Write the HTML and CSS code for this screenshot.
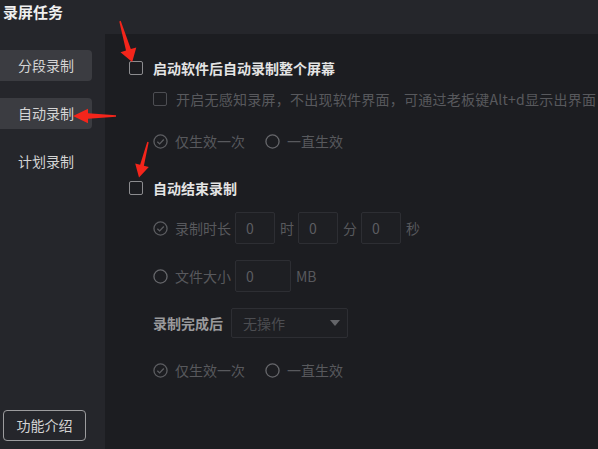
FILE: index.html
```html
<!DOCTYPE html>
<html lang="zh">
<head>
<meta charset="utf-8">
<link rel="stylesheet" href="styles.css">
</head>
<body>
<div class="app">
  <header class="topbar">录屏任务</header>
  <div class="body">
    <aside class="sidebar">
      <div class="nav">
        <div class="nav-item active">分段录制</div>
        <div class="nav-item active">自动录制</div>
        <div class="nav-item">计划录制</div>
      </div>
      <div class="intro">功能介绍</div>
    </aside>
    <main class="main">
      <div class="row r1">
        <span class="cbox"></span>
        <span class="label strong">启动软件后自动录制整个屏幕</span>
      </div>
      <div class="row r2 sub">
        <span class="cbox dim"></span>
        <span class="label dimtext wide-text">开启无感知录屏，不出现软件界面，可通过老板键Alt+d显示出界面</span>
      </div>
      <div class="row r3 sub">
        <svg class="ico" viewBox="0 0 16 16"><circle cx="8" cy="8" r="7" fill="none" stroke="#5c5d61" stroke-width="1.4"/><path d="M4.6 8.2 L7.1 10.6 L11.5 5.9" fill="none" stroke="#5c5d61" stroke-width="1.4"/></svg>
        <span class="label dimtext">仅生效一次</span>
        <svg class="ico gap" viewBox="0 0 16 16"><circle cx="8" cy="8" r="7" fill="none" stroke="#66676b" stroke-width="1.4"/></svg>
        <span class="label dimtext">一直生效</span>
      </div>
      <div class="row r4">
        <span class="cbox"></span>
        <span class="label strong">自动结束录制</span>
      </div>
      <div class="row r5 sub">
        <svg class="ico" viewBox="0 0 16 16"><circle cx="8" cy="8" r="7" fill="none" stroke="#5c5d61" stroke-width="1.4"/><path d="M4.6 8.2 L7.1 10.6 L11.5 5.9" fill="none" stroke="#5c5d61" stroke-width="1.4"/></svg>
        <span class="label dimtext lead">录制时长</span>
        <span class="input">0</span><span class="unit">时</span>
        <span class="input">0</span><span class="unit">分</span>
        <span class="input">0</span><span class="unit">秒</span>
      </div>
      <div class="row r6 sub">
        <svg class="ico" viewBox="0 0 16 16"><circle cx="8" cy="8" r="7" fill="none" stroke="#66676b" stroke-width="1.4"/></svg>
        <span class="label dimtext lead">文件大小</span>
        <span class="input wide">0</span><span class="unit">MB</span>
      </div>
      <div class="row r7 sub">
        <span class="label mid">录制完成后</span>
        <span class="select"><span>无操作</span><svg class="caret" viewBox="0 0 10 6"><path d="M0 0 H10 L5 6 Z" fill="#646569"/></svg></span>
      </div>
      <div class="row r8 sub">
        <svg class="ico" viewBox="0 0 16 16"><circle cx="8" cy="8" r="7" fill="none" stroke="#5c5d61" stroke-width="1.4"/><path d="M4.6 8.2 L7.1 10.6 L11.5 5.9" fill="none" stroke="#5c5d61" stroke-width="1.4"/></svg>
        <span class="label dimtext">仅生效一次</span>
        <svg class="ico gap" viewBox="0 0 16 16"><circle cx="8" cy="8" r="7" fill="none" stroke="#66676b" stroke-width="1.4"/></svg>
        <span class="label dimtext">一直生效</span>
      </div>
    </main>
  </div>
  <svg class="arrows" viewBox="0 0 598 449" width="598" height="449">
    <polygon fill="#f4251b" points="119.3,21.4 120.7,20.8 130.8,49.1 136.3,47.4 132.2,62 120.5,52.2 126,50.5"/>
    <polygon fill="#f4251b" points="116,115.3 88,113.3 88,108.8 73,116 88,123.2 88,118.7 116,116.7"/>
    <polygon fill="#f4251b" points="148.7,142.2 147.3,141.8 140.1,164.8 135.2,163.6 139,177.5 148.8,167 143.9,165.8"/>
  </svg>
</div>
</body>
</html>
```

FILE: styles.css
```css
* { box-sizing: border-box; }
html, body { margin: 0; padding: 0; }
body {
  width: 598px;
  height: 449px;
  overflow: hidden;
  background: #25262b;
  font-family: "Noto Sans CJK SC", "Noto Sans", sans-serif;
  font-size: 14px;
}
.app { position: relative; width: 598px; height: 449px; display: flex; flex-direction: column; }
.topbar {
  height: 34px;
  padding: 2px 0 0 3px;
  color: #f0f0f0;
  font-size: 15px;
  font-weight: bold;
  line-height: 20px;
}
.body { flex: 1; display: flex; }
.sidebar {
  width: 105px;
  display: flex;
  flex-direction: column;
  justify-content: space-between;
  padding: 16px 0 8px 0;
}
.nav { display: flex; flex-direction: column; gap: 17px; }
.nav-item {
  width: 92px;
  height: 31px;
  line-height: 31px;
  text-align: center;
  color: #d4d4d4;
  border-radius: 0 4px 4px 0;
}
.nav-item.active { background: #3b3c41; }
.intro {
  margin-left: 3px;
  width: 83px;
  height: 31px;
  line-height: 29px;
  text-align: center;
  color: #d4d4d4;
  border: 1px solid #9c9c9e;
  border-radius: 4px;
}
.main {
  flex: 1;
  background: #1c1d21;
  padding: 22px 0 0 24px;
  display: flex;
  flex-direction: column;
}
.row { display: flex; align-items: center; height: 24px; }
.row.sub { padding-left: 24px; }
.r2 { margin-top: 7px; }
.r3 { margin-top: 18px; }
.r4 { margin-top: 23px; }
.r5 { margin-top: 12px; height: 32px; }
.r6 { margin-top: 16px; height: 32px; }
.r7 { margin-top: 16px; height: 30px; }
.r8 { margin-top: 20px; }
.cbox {
  width: 14px;
  height: 14px;
  border: 1.5px solid #8c8c8f;
  border-radius: 2px;
  margin-right: 10px;
  flex: none;
}
.cbox.dim { border-color: #4d4e53; margin-right: 9px; }
.ico { width: 15px; height: 15px; margin-right: 7px; flex: none; }
.ico.gap { margin-left: 20px; }
.label { white-space: nowrap; }
.lead { margin-right: 4px; }
.wide-text { letter-spacing: 0.25px; }
.strong { color: #e4e4e4; font-weight: bold; }
.dimtext { color: #58595d; }
.mid { color: #9a9a9c; font-weight: bold; }
.input {
  width: 40px;
  height: 32px;
  border: 1px solid #2d2e33;
  border-radius: 2px;
  background: #1e1f23;
  color: #5c5d61;
  padding-left: 10px;
  line-height: 30px;
  flex: none;
}
.input.wide { width: 56px; }
.unit { color: #58595d; margin: 0 4px 0 5px; }
.select {
  margin-left: 8px;
  width: 117px;
  height: 30px;
  border: 1px solid #2d2e33;
  border-radius: 2px;
  background: #1e1f23;
  color: #4c4d51;
  display: flex;
  align-items: center;
  justify-content: space-between;
  padding: 0 7px 0 11px;
}
.caret { width: 10px; height: 6px; }
.arrows { position: absolute; left: 0; top: 0; pointer-events: none; }
```
